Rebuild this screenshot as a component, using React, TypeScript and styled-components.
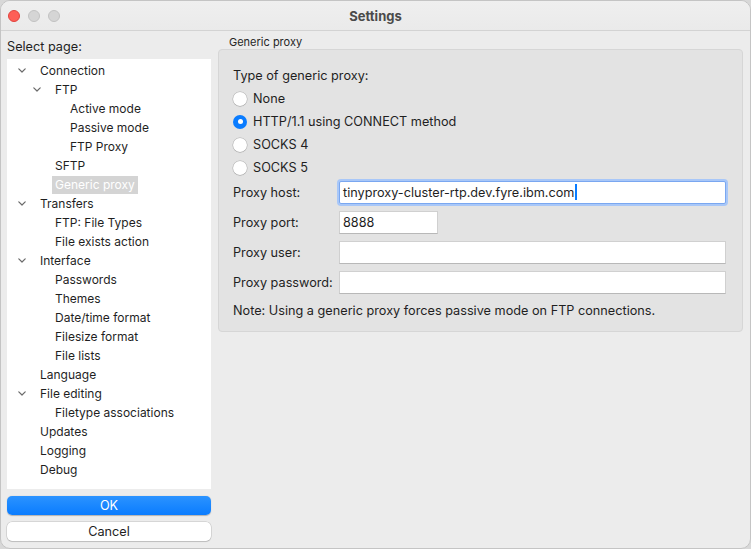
import React from "react";
import styled, { createGlobalStyle } from "styled-components";

const Global = createGlobalStyle`
  html, body { margin: 0; padding: 0; background: #d8d8d8; }
  body { font-family: Inter, "Noto Sans", sans-serif; -webkit-font-smoothing: antialiased; }
  * { box-sizing: border-box; }
`;

const Window = styled.div`
  width: 751px;
  height: 549px;
  background: #ececec;
  border: 1px solid #c4c4c4;
  border-radius: 10px;
  overflow: hidden;
  display: flex;
  flex-direction: column;
  color: #1f1f1f;
  font-size: 12.7px;
`;

const TitleBar = styled.div`
  height: 30px;
  flex: none;
  display: flex;
  align-items: center;
  position: relative;
  border-bottom: 1px solid #d3d3d3;
  background: linear-gradient(#efefef, #eaeaea);
`;

const Lights = styled.div`
  display: flex;
  gap: 8px;
  padding-left: 7px;
`;

const Light = styled.span<{ $c: string; $b: string }>`
  width: 12px;
  height: 12px;
  border-radius: 50%;
  background: ${(p) => p.$c};
  border: 0.5px solid ${(p) => p.$b};
`;

const Title = styled.div`
  position: absolute;
  left: 0;
  right: 0;
  text-align: center;
  font-weight: 700;
  font-size: 13px;
  color: #4a4a4a;
  pointer-events: none;
`;

const Body = styled.div`
  flex: 1;
  display: flex;
  gap: 7px;
  padding: 0 7px 7px 6px;
`;

const LeftCol = styled.div`
  width: 204px;
  display: flex;
  flex-direction: column;
`;

const SelectLabel = styled.div`
  height: 28px;
  line-height: 32px;
  font-size: 12.7px;
`;

const Tree = styled.div`
  background: #ffffff;
  height: 430px;
  padding-top: 2px;
  display: flex;
  flex-direction: column;
`;

const Row = styled.div<{ $level: number }>`
  height: 19px;
  flex: none;
  display: flex;
  align-items: center;
  padding-left: ${(p) => 30 + p.$level * 15}px;
  position: relative;
  font-size: 12px;
`;

const Chevron = styled.svg<{ $level: number }>`
  position: absolute;
  top: 7px;
  left: ${(p) => 11 + p.$level * 15}px;
  width: 8px;
  height: 5px;
`;

const RowText = styled.span<{ $sel?: boolean }>`
  padding: 1px 3px;
  line-height: 16px;
  background: ${(p) => (p.$sel ? "#d4d4d4" : "transparent")};
  color: ${(p) => (p.$sel ? "#ffffff" : "#1f1f1f")};
`;

const Buttons = styled.div`
  display: flex;
  flex-direction: column;
  gap: 7px;
  margin-top: 7px;
`;

const OkButton = styled.div`
  height: 19px;
  border-radius: 5px;
  background: linear-gradient(#2b93ff, #0a7cff);
  color: #fff;
  display: flex;
  align-items: center;
  justify-content: center;
  font-size: 12.7px;
  box-shadow: 0 0.5px 1px rgba(0, 0, 0, 0.25);
`;

const CancelButton = styled.div`
  height: 19px;
  border-radius: 5px;
  background: #fff;
  color: #1f1f1f;
  display: flex;
  align-items: center;
  justify-content: center;
  font-size: 12.7px;
  box-shadow: 0 0 0 0.5px rgba(0, 0, 0, 0.18), 0 1px 1px rgba(0, 0, 0, 0.12);
`;

const RightCol = styled.div`
  flex: 1;
  display: flex;
  flex-direction: column;
`;

const GroupTitle = styled.div`
  height: 18px;
  line-height: 22px;
  padding-left: 11px;
  font-size: 11px;
  color: #262626;
`;

const Panel = styled.div`
  background: #e3e3e3;
  border: 1px solid #d6d6d6;
  border-radius: 4px;
  height: 283px;
  padding: 17px 16px 0 14px;
  display: flex;
  flex-direction: column;
`;

const Heading = styled.div`
  height: 20px;
  line-height: 18px;
`;

const RadioGroup = styled.div`
  height: 90px;
  display: flex;
  flex-direction: column;
`;

const RadioRow = styled.div`
  height: 23px;
  flex: none;
  display: flex;
  align-items: center;
  gap: 6px;
`;

const RadioDot = styled.span<{ $on?: boolean }>`
  width: 14px;
  height: 14px;
  border-radius: 50%;
  flex: none;
  background: ${(p) => (p.$on ? "#0a7cff" : "#fff")};
  box-shadow: ${(p) =>
    p.$on ? "none" : "0 0 0 0.5px rgba(0,0,0,0.22), 0 0.5px 1px rgba(0,0,0,0.15)"};
  display: flex;
  align-items: center;
  justify-content: center;
  &::after {
    content: "";
    width: 5px;
    height: 5px;
    border-radius: 50%;
    background: #fff;
    display: ${(p) => (p.$on ? "block" : "none")};
  }
`;

const FieldRow = styled.div`
  height: 30px;
  display: flex;
  align-items: center;
`;

const FieldLabel = styled.div`
  width: 106px;
  flex: none;
`;

const Input = styled.div<{ $w?: number; $focus?: boolean }>`
  width: ${(p) => (p.$w ? `${p.$w}px` : "387px")};
  height: 23px;
  background: #fff;
  border: 1px solid ${(p) => (p.$focus ? "#7aa7f0" : "#d0d0d0")};
  border-bottom-color: ${(p) => (p.$focus ? "#7aa7f0" : "#b8b8b8")};
  box-shadow: ${(p) => (p.$focus ? "0 0 0 2px #a8c7f8" : "none")};
  border-radius: ${(p) => (p.$focus ? "2px" : "0")};
  display: flex;
  align-items: center;
  padding-left: 3px;
  font-size: 12.7px;
`;

const Caret = styled.span`
  display: inline-block;
  width: 2px;
  height: 16px;
  background: #0a7cff;
  margin-left: 1px;
`;

const Note = styled.div`
  margin-top: 4px;
  height: 20px;
  line-height: 20px;
`;

type Item = { label: string; level: number; open?: boolean; sel?: boolean };

const items: Item[] = [
  { label: "Connection", level: 0, open: true },
  { label: "FTP", level: 1, open: true },
  { label: "Active mode", level: 2 },
  { label: "Passive mode", level: 2 },
  { label: "FTP Proxy", level: 2 },
  { label: "SFTP", level: 1 },
  { label: "Generic proxy", level: 1, sel: true },
  { label: "Transfers", level: 0, open: true },
  { label: "FTP: File Types", level: 1 },
  { label: "File exists action", level: 1 },
  { label: "Interface", level: 0, open: true },
  { label: "Passwords", level: 1 },
  { label: "Themes", level: 1 },
  { label: "Date/time format", level: 1 },
  { label: "Filesize format", level: 1 },
  { label: "File lists", level: 1 },
  { label: "Language", level: 0 },
  { label: "File editing", level: 0, open: true },
  { label: "Filetype associations", level: 1 },
  { label: "Updates", level: 0 },
  { label: "Logging", level: 0 },
  { label: "Debug", level: 0 },
];

const radios = ["None", "HTTP/1.1 using CONNECT method", "SOCKS 4", "SOCKS 5"];

export default function App() {
  return (
    <>
      <Global />
      <Window>
        <TitleBar>
          <Lights>
            <Light $c="#fe5f57" $b="#e0443e" />
            <Light $c="#d5d5d5" $b="#c2c2c2" />
            <Light $c="#d5d5d5" $b="#c2c2c2" />
          </Lights>
          <Title>Settings</Title>
        </TitleBar>
        <Body>
          <LeftCol>
            <SelectLabel>Select page:</SelectLabel>
            <Tree>
              {items.map((it) => (
                <Row key={it.label} $level={it.level}>
                  {it.open && (
                    <Chevron viewBox="0 0 8 5" $level={it.level}>
                      <path
                        d="M0.8 0.8 L4 4 L7.2 0.8"
                        fill="none"
                        stroke="#6b6b6b"
                        strokeWidth="1.2"
                        strokeLinecap="round"
                        strokeLinejoin="round"
                      />
                    </Chevron>
                  )}
                  <RowText $sel={it.sel}>{it.label}</RowText>
                </Row>
              ))}
            </Tree>
            <Buttons>
              <OkButton>OK</OkButton>
              <CancelButton>Cancel</CancelButton>
            </Buttons>
          </LeftCol>
          <RightCol>
            <GroupTitle>Generic proxy</GroupTitle>
            <Panel>
              <Heading>Type of generic proxy:</Heading>
              <RadioGroup>
                {radios.map((r, i) => (
                  <RadioRow key={r}>
                    <RadioDot $on={i === 1} />
                    {r}
                  </RadioRow>
                ))}
              </RadioGroup>
              <FieldRow>
                <FieldLabel>Proxy host:</FieldLabel>
                <Input $focus $w={387}>
                  tinyproxy-cluster-rtp.dev.fyre.ibm.com
                  <Caret />
                </Input>
              </FieldRow>
              <FieldRow>
                <FieldLabel>Proxy port:</FieldLabel>
                <Input $w={99}>8888</Input>
              </FieldRow>
              <FieldRow>
                <FieldLabel>Proxy user:</FieldLabel>
                <Input />
              </FieldRow>
              <FieldRow>
                <FieldLabel>Proxy password:</FieldLabel>
                <Input />
              </FieldRow>
              <Note>Note: Using a generic proxy forces passive mode on FTP connections.</Note>
            </Panel>
          </RightCol>
        </Body>
      </Window>
    </>
  );
}
